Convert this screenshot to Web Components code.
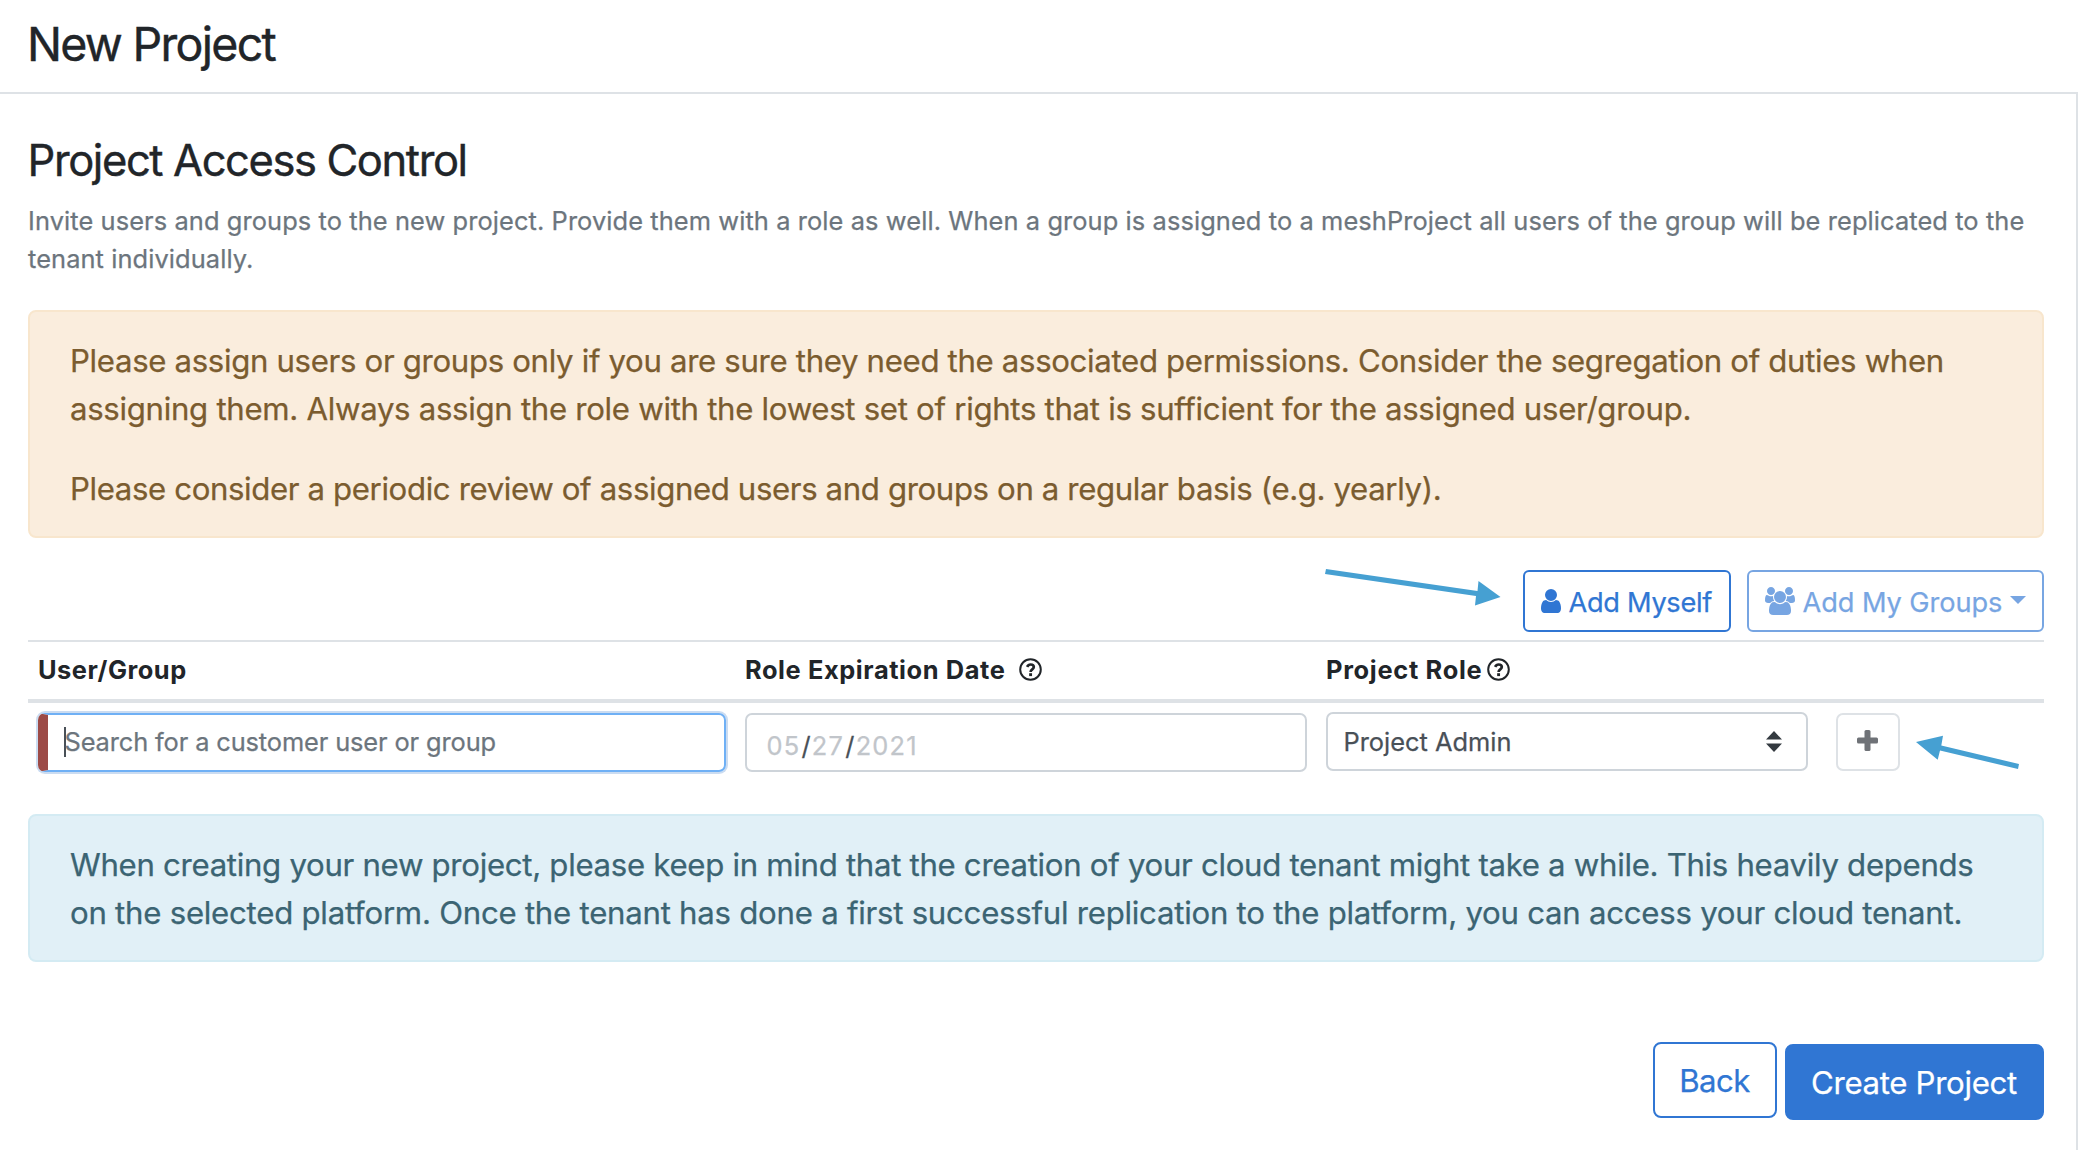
<!DOCTYPE html>
<html lang="en">
<head>
<meta charset="utf-8">
<title>New Project</title>
<style>
  html, body { margin: 0; background: #fff; }
  body { font-family: Inter, "Liberation Sans", sans-serif; color: #212529; -webkit-text-stroke: .25px; }
  .ln { display: block; white-space: nowrap; }
</style>
</head>
<body>
<project-page>
  <page-header slot="header">New Project</page-header>
  <section-intro>
    <span slot="title">Project Access Control</span>
    <span class="ln" style="letter-spacing:.098px">Invite users and groups to the new project. Provide them with a role as well. When a group is assigned to a meshProject all users of the group will be replicated to the</span>
    <span class="ln" style="letter-spacing:.098px">tenant individually.</span>
  </section-intro>
  <alert-box kind="warning">
    <span class="ln" style="letter-spacing:-.336px">Please assign users or groups only if you are sure they need the associated permissions. Consider the segregation of duties when</span>
    <span class="ln" style="letter-spacing:-.304px;margin-bottom:32px">assigning them. Always assign the role with the lowest set of rights that is sufficient for the assigned user/group.</span>
    <span class="ln" style="letter-spacing:-.38px">Please consider a periodic review of assigned users and groups on a regular basis (e.g. yearly).</span>
  </alert-box>
  <access-toolbar></access-toolbar>
  <access-table></access-table>
  <alert-box kind="info">
    <span class="ln" style="letter-spacing:-.305px">When creating your new project, please keep in mind that the creation of your cloud tenant might take a while. This heavily depends</span>
    <span class="ln" style="letter-spacing:-.258px">on the selected platform. Once the tenant has done a first successful replication to the platform, you can access your cloud tenant.</span>
  </alert-box>
  <form-footer></form-footer>
  <pointer-arrows slot="overlay"></pointer-arrows>
</project-page>

<script>
const define = (name, html) => customElements.define(name, class extends HTMLElement {
  constructor() {
    super();
    this.attachShadow({ mode: 'open' }).innerHTML = html;
  }
});

define('project-page', `
  <style>
    :host { display: block; position: relative; width: 2078px; height: 1160px; overflow: hidden; background: #fff; }
    main { display: flex; flex-direction: column; box-sizing: border-box; height: 1056px; padding: 40px 32px 0 28px; border-right: 2px solid #dee2e6; }
  </style>
  <slot name="header"></slot>
  <main><slot></slot></main>
  <slot name="overlay"></slot>`);

define('page-header', `
  <style>
    :host { display: block; border-bottom: 2px solid #dee2e6; }
    h1 { margin: 0; padding: 16px 27px 20px; font-size: 46.5px; font-weight: 400; line-height: 56px; letter-spacing: -1.72px; -webkit-text-stroke: .4px; }
  </style>
  <h1><slot></slot></h1>`);

define('section-intro', `
  <style>
    :host { display: block; }
    h2 { margin: 0 0 16px -.5px; font-size: 43.5px; font-weight: 400; line-height: 52px; letter-spacing: -1.4px; -webkit-text-stroke: .4px; }
    p { margin: 0; font-size: 25.4px; line-height: 38px; color: #6c757d; }
  </style>
  <h2><slot name="title"></slot></h2>
  <p><slot></slot></p>`);

define('alert-box', `
  <style>
    :host { display: block; box-sizing: border-box; padding: 25px 40px 23px; border: 2px solid; border-radius: 8px; font-size: 31.2px; line-height: 48px; }
    :host([kind=warning]) { margin-top: 32px; background: #faeddd; border-color: #f8e6cd; color: #7b5c2f; }
    :host([kind=info]) { background: #e1f0f7; border-color: #d4ebf3; color: #3b6473; }
  </style>
  <slot></slot>`);

define('outline-button', `
  <style>
    :host { display: flex; align-items: center; box-sizing: border-box; height: 62px; padding: 0 16px; border: 2px solid #3076d3; border-radius: 6px; color: #3076d3; font-size: 27.2px; white-space: nowrap; }
    :host([disabled]) { opacity: .65; }
    :host([large]) { height: 76px; justify-content: center; padding: 2px 0 0; border-radius: 8px; font-size: 31.2px; }
    :host([filled]) { background: #3076d3; color: #fff; }
  </style>
  <slot></slot>`);

define('access-toolbar', `
  <style>
    :host { display: flex; justify-content: flex-end; gap: 16px; margin: 32px 0 8px; }
    .me { width: 208px; letter-spacing: -.3px; }
    .groups { width: 297px; letter-spacing: -.07px; }
    svg { flex: none; fill: currentColor; }
    .me span { margin-left: 7.5px; padding-top: 2px; }
    .groups span { margin-left: 7.5px; padding-top: 2px; }
    .caret { margin: -3px 0 0 7.5px; }
  </style>
  <outline-button class="me">
    <svg width="20" height="24" viewBox="0 128 1280 1536"><path d="M1280 1399q0 109-62.5 187t-150.5 78h-854q-88 0-150.5-78t-62.5-187q0-85 8.5-160.5t31.5-152 58.5-131 94-89 134.5-34.5q131 128 313 128t313-128q76 0 134.5 34.5t94 89 58.5 131 31.5 152 8.5 160.5zm-256-887q0 159-112.5 271.5t-271.5 112.5-271.5-112.5-112.5-271.5 112.5-271.5 271.5-112.5 271.5 112.5 112.5 271.5z"/></svg>
    <span>Add Myself</span>
  </outline-button>
  <outline-button class="groups" disabled>
    <svg width="30" height="28" viewBox="0 0 1920 1792"><path d="M593 896q-162 5-265 128h-134q-82 0-138-40.5t-56-118.5q0-353 124-353 6 0 43.5 21t97.5 42.5 119 21.5q67 0 133-23-5 37-5 66 0 139 81 256zm1071 637q0 120-73 189.5t-194 69.5h-874q-121 0-194-69.5t-73-189.5q0-53 3.5-103.5t14-109 26.5-108.5 43-97.5 62-81 85.5-53.5 111.5-20q10 0 43 21.5t73 48 107 48 135 21.5 135-21.5 107-48 73-48 43-21.5q61 0 111.5 20t85.5 53.5 62 81 43 97.5 26.5 108.5 14 109 3.5 103.5zm-1024-1277q0 106-75 181t-181 75-181-75-75-181 75-181 181-75 181 75 75 181zm704 384q0 159-112.5 271.5t-271.5 112.5-271.5-112.5-112.5-271.5 112.5-271.5 271.5-112.5 271.5 112.5 112.5 271.5zm576 225q0 78-56 118.5t-138 40.5h-134q-103-123-265-128 81-117 81-256 0-29-5-66 66 23 133 23 59 0 119-21.5t97.5-42.5 43.5-21q124 0 124 353zm-128-609q0 106-75 181t-181 75-181-75-75-181 75-181 181-75 181 75 75 181z"/></svg>
    <span>Add My Groups</span>
    <svg class="caret" width="16" height="8" viewBox="0 0 16 8"><path d="M0 0h16L8 8z"/></svg>
  </outline-button>`);

define('help-icon', `
  <style>:host { display: block; width: 23px; height: 23px; } svg { display: block; }</style>
  <svg width="23" height="23" viewBox="0 0 23 23" fill="none" stroke="currentColor">
    <circle cx="11.5" cy="11.5" r="10.3" stroke-width="2"/>
    <path d="M8.1 8.9C8.9 7.3 10 6.5 11.6 6.5c1.8 0 3.2 1 3.2 2.6 0 2.3-3.2 2.2-3.2 4.8" stroke-width="2.7"/>
    <path d="M11.6 15.200v2.900" stroke-width="2.9"/>
  </svg>`);

define('access-table', `
  <style>
    :host { display: block; }
    .row { display: grid; grid-template-columns: 707px 581px 510px 64px; padding-left: 10px; }
    .head { box-sizing: border-box; height: 63px; align-items: center; padding-bottom: 2px; border-top: 2px solid #dee2e6; border-bottom: 4px solid #dee2e6; font-size: 25.4px; font-weight: 700; -webkit-text-stroke: 0; }
    .head div { display: flex; align-items: center; white-space: nowrap; }
    .body { box-sizing: border-box; height: 111px; padding-top: 9px; align-items: start; font-size: 25.4px; white-space: nowrap; }
    .box { display: flex; align-items: center; box-sizing: border-box; border: 2px solid #ced4da; border-radius: 7px; color: #495057; }
    .search { width: 688px; height: 59px; margin-top: 1px; padding: 0 0 2px 15px; border-color: #6fb0f5; border-left: 10px solid #9c4a46; box-shadow: 0 0 0 2px #cbdcf1; color: #6c757d; letter-spacing: -.12px; }
    .caret { width: 2px; height: 30px; margin: 0 -1.5px 0 1px; background: #495057; }
    .date { width: 562px; height: 59px; margin-top: 1px; padding: 6px 0 0 19.5px; }
    .date i { font-style: normal; color: #c1c5ca; letter-spacing: 1.2px; }
    .date b { font-weight: 400; width: 11.5px; text-align: center; }
    .select { width: 482px; height: 59px; padding: 0 24px 0 15.5px; justify-content: space-between; }
    .plus { width: 64px; height: 58px; margin-top: 1px; padding: 0 2px 3px 0; justify-content: center; border-color: #dee2e6; }
  </style>
  <div class="row head">
    <div style="letter-spacing:.52px">User/Group</div>
    <div style="letter-spacing:.59px">Role Expiration Date<help-icon style="margin-left:14px"></help-icon></div>
    <div style="letter-spacing:.7px">Project Role<help-icon style="margin-left:5px"></help-icon></div>
  </div>
  <div class="row body">
    <div class="box search"><span class="caret"></span><span>Search for a customer user or group</span></div>
    <div class="box date"><i>05</i><b>/</b><i>27</i><b>/</b><i>2021</i></div>
    <div class="box select"><span>Project Admin</span>
      <svg width="16" height="21" viewBox="0 0 16 21" fill="#343a40"><path d="M0 8.5 8 0l8 8.5zM0 12.5h16L8 21z"/></svg>
    </div>
    <div class="box plus">
      <svg width="21" height="21" viewBox="0 0 21 21" fill="#6f7277"><rect x="0" y="7.5" width="21" height="6" rx="1.5"/><rect x="7.5" y="0" width="6" height="21" rx="1.5"/></svg>
    </div>
  </div>`);

define('form-footer', `
  <style>
    :host { display: flex; justify-content: flex-end; align-items: flex-start; gap: 8px; margin-top: 80px; }
    .back { width: 124px; padding-right: 1px; letter-spacing: -.55px; }
    .create { width: 259px; margin-top: 2px; padding-right: 1px; letter-spacing: -.33px; }
  </style>
  <outline-button large class="back">Back</outline-button>
  <outline-button large filled class="create">Create Project</outline-button>`);

define('pointer-arrows', `
  <style>:host { position: absolute; inset: 0; pointer-events: none; } svg { display: block; }</style>
  <svg width="2078" height="1160" viewBox="0 0 2078 1160" fill="#46a0d2">
    <path d="M1326 569 1477.5 591 1478.5 581 1500.5 597 1475 605.5 1476 596 1325 574z"/>
    <path d="M1916 742 1943 735.7 1941.3 745.5 2019 764 2018 769 1940 750.5 1937.7 759.7z"/>
  </svg>`);
</script>
</body>
</html>
